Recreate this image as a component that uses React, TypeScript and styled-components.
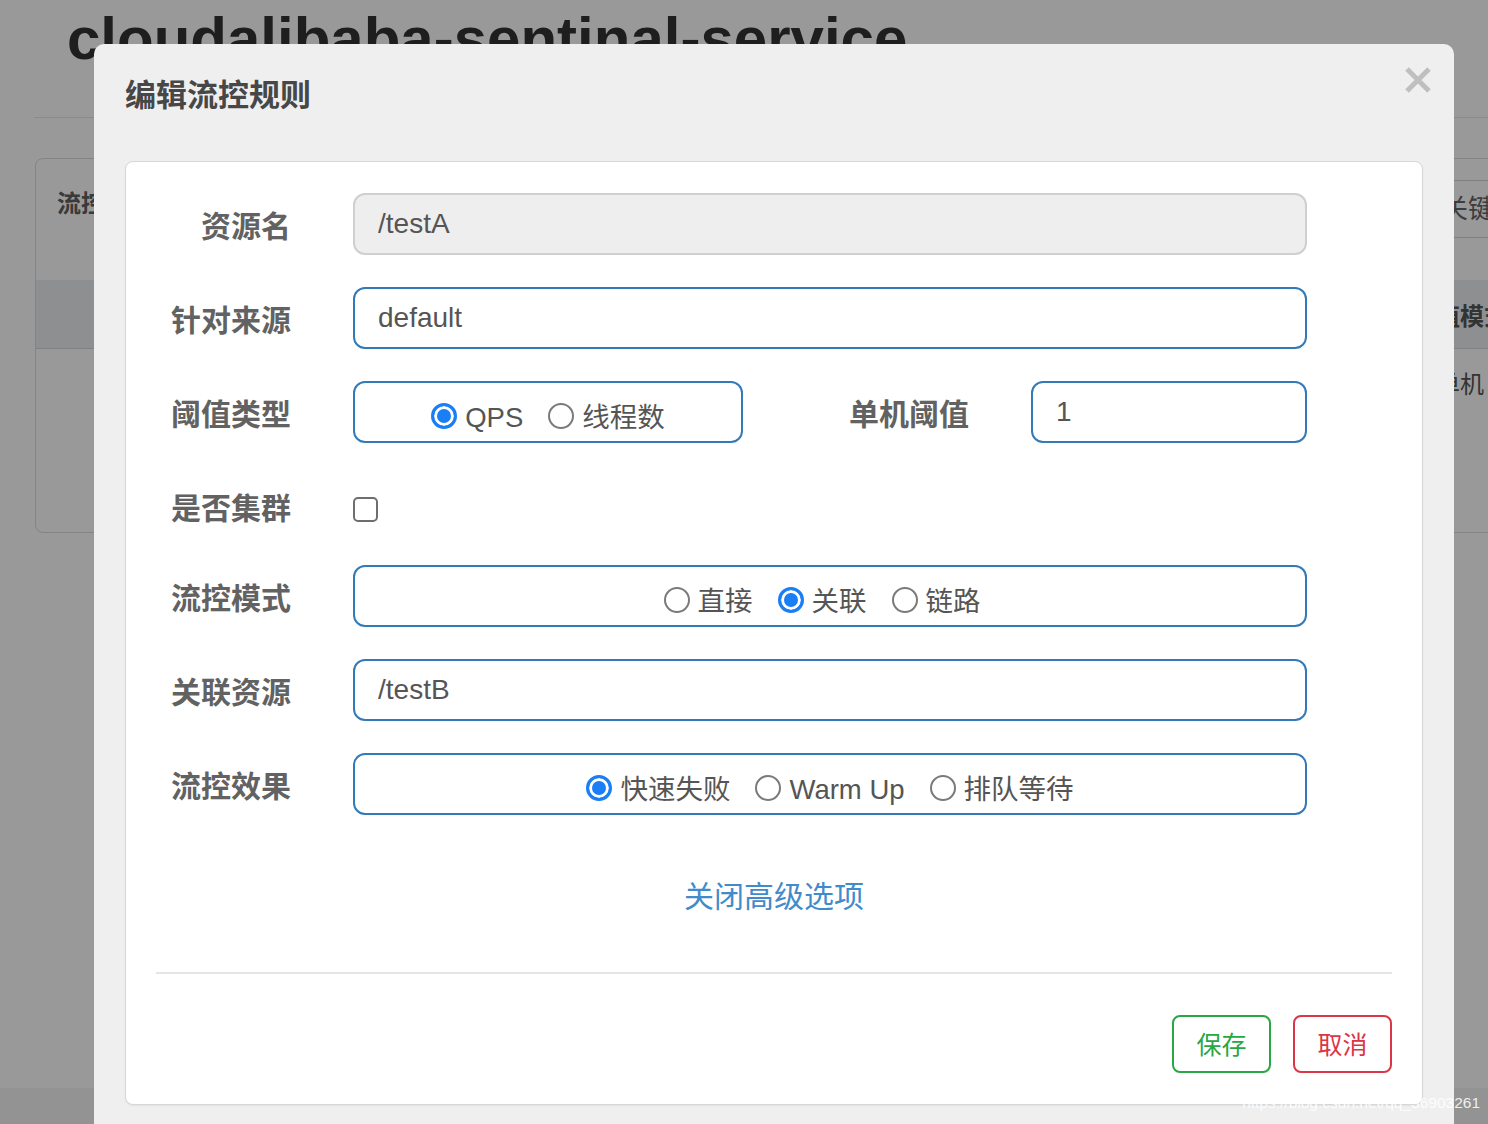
import styled, { createGlobalStyle } from "styled-components";

const GlobalStyle = createGlobalStyle`
  html, body {
    margin: 0;
    padding: 0;
  }
  body {
    width: 1488px;
    height: 1124px;
    overflow: hidden;
    background: #fff;
    font-family: "Liberation Sans", "Noto Sans CJK SC", sans-serif;
  }
  * { box-sizing: border-box; }
`;

// ---- page behind the modal ----
const Page = styled.div`
  position: relative;
  width: 1488px;
  height: 1124px;
  overflow: hidden;
  padding-left: 34px;
`;

const AppTitle = styled.h1`
  margin: 0;
  padding: 4px 0 0 33px;
  font-size: 60px;
  line-height: 70px;
  font-weight: 700;
  color: #333;
  white-space: nowrap;
`;

const Rule = styled.div`
  margin-top: 43px;
  border-top: 1px solid #e8e8e8;
  width: 1600px;
`;

const Panel = styled.div`
  margin: 40px 0 0 1px;
  width: 1600px;
  height: 375px;
  border: 1px solid #dcdcdc;
  border-radius: 8px;
  overflow: hidden;
`;

const PanelHead = styled.div`
  display: grid;
  grid-template-columns: 1382px 320px;
  height: 121px;
  padding-top: 21px;
`;

const PanelTitle = styled.div`
  padding: 6px 0 0 21px;
  font-size: 24px;
  line-height: 36px;
  font-weight: 700;
  color: #616161;
`;

const SearchBox = styled.div`
  height: 58px;
  border: 1px solid #d6d6d6;
  border-radius: 4px;
  padding-left: 23px;
  font-size: 26px;
  line-height: 56px;
  color: #666;
`;

const TableHead = styled.div`
  display: grid;
  grid-template-columns: 1376px 96px 1fr;
  height: 69px;
  background: #edeef2;
  border-bottom: 1px solid #d8d8d8;
  align-items: center;
`;

const HeadCell = styled.div`
  grid-column: 2;
  text-align: center;
  font-size: 24px;
  font-weight: 700;
  color: #555;
  white-space: nowrap;
`;

const TableRow = styled.div`
  display: grid;
  grid-template-columns: 1376px 96px 1fr;
  height: 66px;
  align-items: center;
`;

const Cell = styled.div`
  grid-column: 2;
  text-align: center;
  font-size: 24px;
  color: #555;
`;

const PageFooter = styled.div`
  position: absolute;
  left: 0;
  right: 0;
  top: 1088px;
  height: 40px;
  background: #f5f5f5;
`;

// ---- modal ----
const Backdrop = styled.div`
  position: absolute;
  inset: 0;
  background: rgba(0, 0, 0, 0.4);
`;

const Modal = styled.div`
  position: absolute;
  left: 94px;
  top: 44px;
  width: 1360px;
  background: #efefef;
  border-radius: 10px;
  padding-bottom: 40px;
`;

const ModalHeader = styled.div`
  position: relative;
  height: 117px;
  padding: 32px 31px 0;
`;

const ModalTitle = styled.h4`
  margin: 0;
  font-size: 31px;
  line-height: 40px;
  font-weight: 700;
  color: #474747;
`;

const CloseButton = styled.button`
  position: absolute;
  right: 22px;
  top: 22px;
  width: 28px;
  height: 28px;
  padding: 0;
  border: 0;
  background: transparent;
  cursor: pointer;
`;

const Card = styled.div`
  margin: 0 31px;
  background: #fff;
  border: 1px solid #d7d7d7;
  border-radius: 8px;
  padding: 31px 30px 31px;
  box-shadow: 0 1px 2px rgba(0, 0, 0, 0.06);
`;

const Form = styled.div`
  display: flex;
  flex-direction: column;
  gap: 32px;
`;

const FormRow = styled.div<{ $h?: number; $pad?: number }>`
  display: grid;
  grid-template-columns: 135px 954px;
  column-gap: 62px;
  align-items: center;
  height: ${({ $h }) => $h ?? 62}px;
  padding-top: ${({ $pad }) => $pad ?? 0}px;
`;

const Label = styled.div<{ $flat?: boolean }>`
  text-align: right;
  padding-top: ${({ $flat }) => ($flat ? 0 : 6)}px;
  font-size: 30px;
  line-height: 40px;
  font-weight: 700;
  color: #626262;
  white-space: nowrap;
`;

const TextInput = styled.input<{ $w?: number }>`
  width: ${({ $w }) => ($w ? `${$w}px` : "100%")};
  height: 62px;
  border: 2px solid #337ab7;
  border-radius: 12px;
  padding: 0 23px;
  font-family: "Liberation Sans", "Noto Sans CJK SC", sans-serif;
  font-size: 28px;
  color: #555;
  background: #fff;
  outline: none;

  &:read-only {
    background: #eee;
    border-color: #cfcfcf;
  }
`;

const SplitRow = styled.div`
  display: flex;
  align-items: center;
`;

const SideLabel = styled(Label)`
  flex: 1;
  padding-right: 62px;
`;

const RadioBox = styled.div<{ $w?: number; $skew?: number }>`
  display: flex;
  align-items: center;
  justify-content: center;
  gap: 25px;
  width: ${({ $w }) => ($w ? `${$w}px` : "100%")};
  height: 62px;
  padding-top: 12px;
  padding-right: ${({ $skew }) => $skew ?? 0}px;
  border: 2px solid #337ab7;
  border-radius: 12px;
`;

const RadioItem = styled.label`
  display: flex;
  align-items: center;
  gap: 8px;
  font-size: 27.5px;
  line-height: 36px;
  color: #555;
  white-space: nowrap;
`;

const RadioDot = styled.span<{ $on?: boolean }>`
  display: inline-block;
  width: 26px;
  height: 26px;
  border-radius: 50%;
  border: ${({ $on }) => ($on ? "3px solid #1a7ef7" : "2px solid #7a7a7a")};
  background: ${({ $on }) => ($on ? "#1a7ef7" : "#fff")};
  box-shadow: ${({ $on }) => ($on ? "inset 0 0 0 3px #fff" : "none")};
  margin-top: -4px;
`;

const CheckBox = styled.span`
  display: block;
  width: 25px;
  height: 25px;
  border: 2px solid #6e6e6e;
  border-radius: 5px;
  background: #fff;
`;

const ToggleLink = styled.a`
  display: block;
  margin-top: 62px;
  text-align: center;
  font-size: 30px;
  line-height: 40px;
  color: #428bca;
  text-decoration: none;
  cursor: pointer;
`;

const Divider = styled.div`
  margin-top: 55px;
  border-top: 2px solid #e5e5e5;
`;

const Footer = styled.div`
  display: flex;
  justify-content: flex-end;
  gap: 22px;
  padding-top: 41px;
`;

const Button = styled.button<{ $tone: string }>`
  width: 99px;
  height: 58px;
  padding-bottom: 3px;
  border: 2px solid ${({ $tone }) => $tone};
  border-radius: 8px;
  background: #fff;
  color: ${({ $tone }) => $tone};
  font-family: "Liberation Sans", "Noto Sans CJK SC", sans-serif;
  font-size: 25px;
  cursor: pointer;
`;

const Watermark = styled.div`
  position: absolute;
  right: 8px;
  top: 1094px;
  font-size: 15.5px;
  color: rgba(255, 255, 255, 0.88);
  white-space: nowrap;
`;

type Opt = { label: string; on?: boolean };

const Radios = ({ items, width, skew }: { items: Opt[]; width?: number; skew?: number }) => (
  <RadioBox $w={width} $skew={skew}>
    {items.map((o) => (
      <RadioItem key={o.label}>
        <RadioDot $on={o.on} />
        {o.label}
      </RadioItem>
    ))}
  </RadioBox>
);

const App = () => {
  return (
    <>
      <GlobalStyle />
      <Page>
        <AppTitle>cloudalibaba-sentinal-service</AppTitle>
        <Rule />
        <Panel>
          <PanelHead>
            <PanelTitle>流控规则</PanelTitle>
            <SearchBox>关键字</SearchBox>
          </PanelHead>
          <TableHead>
            <HeadCell>阈值模式</HeadCell>
          </TableHead>
          <TableRow>
            <Cell>单机</Cell>
          </TableRow>
        </Panel>
        <PageFooter />

        <Backdrop />

        <Modal>
          <ModalHeader>
            <ModalTitle>编辑流控规则</ModalTitle>
            <CloseButton aria-label="close">
              <svg width="28" height="28" viewBox="0 0 28 28">
                <path d="M3 3 L25 25 M25 3 L3 25" stroke="#bfbfbf" strokeWidth="5" />
              </svg>
            </CloseButton>
          </ModalHeader>

          <Card>
            <Form>
              <FormRow>
                <Label>资源名</Label>
                <TextInput readOnly value="/testA" />
              </FormRow>
              <FormRow>
                <Label>针对来源</Label>
                <TextInput defaultValue="default" />
              </FormRow>
              <FormRow>
                <Label>阈值类型</Label>
                <SplitRow>
                  <Radios width={390} items={[{ label: "QPS", on: true }, { label: "线程数" }]} />
                  <SideLabel>单机阈值</SideLabel>
                  <TextInput $w={276} defaultValue="1" />
                </SplitRow>
              </FormRow>
              <FormRow $h={58} $pad={10}>
                <Label $flat>是否集群</Label>
                <CheckBox />
              </FormRow>
              <FormRow>
                <Label>流控模式</Label>
                <Radios
                  skew={16}
                  items={[{ label: "直接" }, { label: "关联", on: true }, { label: "链路" }]}
                />
              </FormRow>
              <FormRow>
                <Label>关联资源</Label>
                <TextInput defaultValue="/testB" />
              </FormRow>
              <FormRow>
                <Label>流控效果</Label>
                <Radios
                  items={[{ label: "快速失败", on: true }, { label: "Warm Up" }, { label: "排队等待" }]}
                />
              </FormRow>
            </Form>

            <ToggleLink>关闭高级选项</ToggleLink>
            <Divider />
            <Footer>
              <Button $tone="#28a745">保存</Button>
              <Button $tone="#dc3545">取消</Button>
            </Footer>
          </Card>
        </Modal>

        <Watermark>https://blog.csdn.net/qq_36903261</Watermark>
      </Page>
    </>
  );
};

export default App;
